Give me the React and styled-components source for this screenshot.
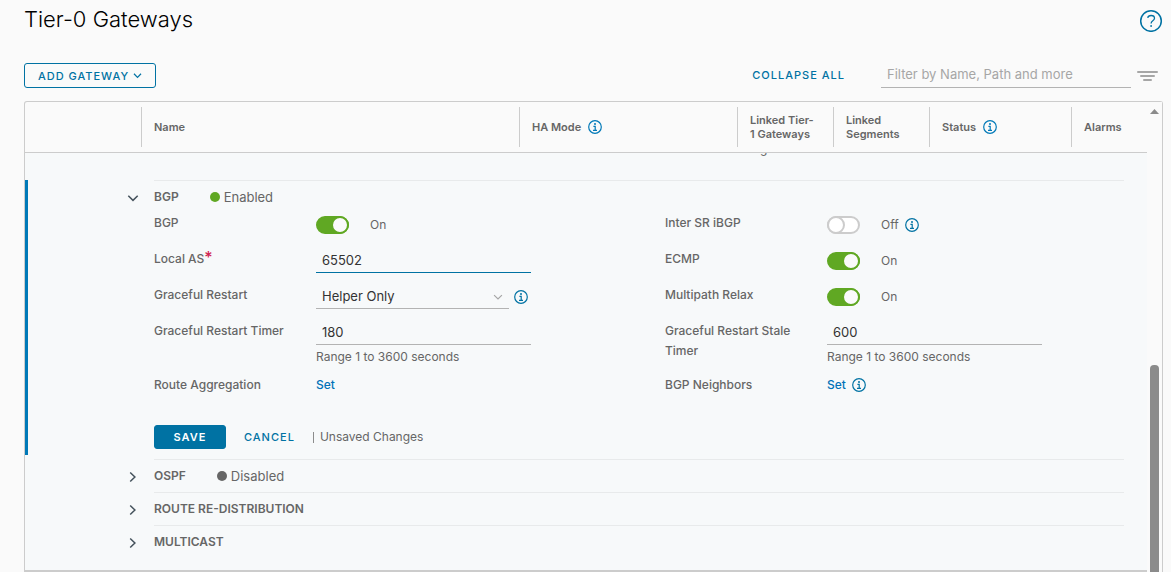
import React, { useState } from "react";
import styled, { createGlobalStyle } from "styled-components";

const Global = createGlobalStyle`
  *, *::before, *::after { box-sizing: border-box; }
  html { background: #fafafa; }
  body {
    margin: 0;
    color: #666;
    font: 400 12px/20px Inter, "Open Sans", "Liberation Sans", sans-serif;
  }
  button, input, select { font: inherit; color: inherit; }
`;

const Page = styled.main`
  padding: 4px 8px 0 24px;
`;

const TitleBar = styled.header`
  display: flex;
  align-items: flex-start;
  justify-content: space-between;
  height: 32px;
`;

const Title = styled.h1`
  margin: 0;
  color: #000;
  font-size: 22px;
  line-height: 30px;
  font-weight: 300;
`;

const IconButton = styled.button`
  display: flex;
  padding: 0;
  border: 0;
  background: none;
  color: ${(p) => p.$color || "#0072a3"};
  cursor: pointer;
`;

const HelpButton = styled(IconButton)`
  margin-top: 4px;
`;

const Toolbar = styled.div`
  display: flex;
  align-items: center;
  height: 25px;
  margin: 27px 0 13px;
`;

const Button = styled.button`
  display: flex;
  align-items: center;
  justify-content: center;
  gap: 4px;
  height: ${(p) => (p.$kind === "outline" ? "25px" : "24px")};
  padding: ${(p) => (p.$kind === "flat" ? "0" : "0 12px")};
  min-width: ${(p) => ({ primary: "72px", outline: "132px", flat: "0" })[p.$kind]};
  border: ${(p) => (p.$kind === "flat" ? "0" : "1px solid #0072a3")};
  border-radius: 3px;
  background: ${(p) => (p.$kind === "primary" ? "#0072a3" : "transparent")};
  color: ${(p) => (p.$kind === "primary" ? "#fff" : "#0072a3")};
  font-size: 11px;
  line-height: 22px;
  font-weight: ${(p) => (p.$kind === "primary" ? 600 : 500)};
  letter-spacing: 1px;
  text-transform: uppercase;
  white-space: nowrap;
  cursor: pointer;
`;

const Tools = styled.div`
  display: flex;
  align-items: flex-start;
  margin-left: auto;
  padding-right: 5px;
`;

const Search = styled.input`
  width: 250px;
  height: 25px;
  margin: 0 6px 0 36px;
  padding: 0 6px 2px;
  border: 0;
  border-bottom: 1px solid #b3b3b3;
  background: transparent;
  font-size: 13px;
  outline: 0;
  &::placeholder { color: #a6a6a6; opacity: 1; }
`;

const FilterButton = styled(IconButton)`
  align-self: center;
`;

const Frame = styled.section`
  display: flex;
  border: 1px solid #ccc;
  border-bottom: 0;
  border-radius: 3px 3px 0 0;
`;

const Table = styled.table`
  flex: 1;
  width: 100%;
  table-layout: fixed;
  border-collapse: separate;
  border-spacing: 0;
`;

const HeadCell = styled.th`
  width: ${(p) => (p.$width ? p.$width + "px" : "auto")};
  height: 51px;
  padding: 5px 0;
  border-bottom: 1px solid #ccc;
  text-align: left;
  vertical-align: middle;
  font-size: 11px;
  line-height: 14px;
  font-weight: 600;
`;

const HeadLabel = styled.div`
  display: flex;
  align-items: center;
  gap: 7px;
  height: 40px;
  padding-left: 12px;
  border-left: 1px solid #ccc;
`;

const Detail = styled.td`
  padding: 0;
  border-bottom: 2px solid #ccc;
  background: #f7f9fa;
`;

const CutLine = styled.div`
  display: flex;
  align-items: flex-end;
  height: 3px;
  margin: 0 0 24px 735px;
  overflow: hidden;
  line-height: 14px;
`;

const Section = styled.section`
  display: grid;
  grid-template-columns: 126px 1fr;
  padding-right: 23px;
  margin-bottom: ${(p) => (p.$active ? "4px" : "0")};
  border-left: 3px solid ${(p) => (p.$active ? "#0079b8" : "transparent")};
`;

const Expander = styled.button`
  display: flex;
  align-items: center;
  justify-content: flex-end;
  height: 33px;
  padding: 2px 15px 0 0;
  border: 0;
  background: none;
  color: #45525c;
  cursor: pointer;
`;

const SectionBody = styled.div`
  border-top: 1px solid #e8eaeb;
  padding-bottom: ${(p) => p.$bottom || 0}px;
`;

const SectionHead = styled.div`
  display: flex;
  align-items: center;
  gap: 31px;
  height: 32px;
`;

const SectionTitle = styled.h2`
  margin: 0;
  font-size: 12px;
  font-weight: 600;
`;

const Status = styled.span`
  display: flex;
  align-items: center;
  gap: 4px;
  font-size: 13px;
  &::before {
    content: "";
    width: 10px;
    height: 10px;
    border-radius: 50%;
    background: ${(p) => (p.$on ? "#60a823" : "#666")};
  }
`;

const Form = styled.form`
  display: grid;
  grid-template-columns: 1fr 1fr;
  column-gap: 52px;
`;

const Field = styled.div`
  display: grid;
  grid-template-columns: 162px 215px;
  align-items: start;
  min-height: 36px;
`;

const Label = styled.label`
  padding-right: 16px;
  font-weight: 500;
`;

const Required = styled.span`
  color: #d0214f;
  font-size: 16px;
  line-height: 12px;
`;

const Control = styled.div`
  display: flex;
  align-items: center;
  gap: ${(p) => p.$gap || 6}px;
  min-height: ${(p) => (p.$link ? "20px" : "24px")};
`;

const Toggle = styled.input`
  appearance: none;
  width: 33px;
  height: 18px;
  margin: 0 15px 0 0;
  border: 2px solid #ccc;
  border-radius: 9px;
  background: #fff;
  cursor: pointer;
  &::before {
    content: "";
    display: block;
    width: 18px;
    height: 18px;
    margin: -2px;
    border: 2px solid #ccc;
    border-radius: 50%;
    background: #fff;
  }
  &:checked { border-color: #60a823; background: #60a823; }
  &:checked::before {
    margin-left: 13px;
    border-color: #60a823;
    background: #fafafa;
  }
`;

const TextInput = styled.input`
  width: 100%;
  height: 24px;
  padding: 0 6px 1px;
  border: 0;
  border-bottom: 1px solid ${(p) => (p.$active ? "#0072a3" : "#b3b3b3")};
  background: transparent;
  color: #333;
  font-size: 13px;
  outline: 0;
`;

const SelectBox = styled.div`
  display: grid;
  flex: 0 0 193px;
  align-items: center;
  border-bottom: 1px solid #b3b3b3;
  color: #a6a6a6;
  & > * { grid-area: 1 / 1; }
  & > svg { justify-self: end; margin-right: 6px; pointer-events: none; }
`;

const Select = styled.select`
  appearance: none;
  width: 100%;
  height: 23px;
  padding: 0 6px 1px;
  border: 0;
  background: transparent;
  color: #333;
  font-size: 13px;
  outline: 0;
`;

const Help = styled.p`
  margin: 2px 0 8px;
  font-size: 12px;
`;

const Link = styled.a`
  color: #0072b8;
  font-weight: 500;
  text-decoration: none;
`;

const Actions = styled.div`
  display: flex;
  align-items: center;
  grid-column: 1 / -1;
  gap: 18px;
  margin-top: 14px;
`;

const Unsaved = styled.span`
  display: flex;
  align-items: center;
  gap: 6px;
  &::before {
    content: "";
    width: 1px;
    height: 11px;
    background: #8c8c8c;
  }
`;

const Scrollbar = styled.div`
  display: flex;
  flex: 0 0 15px;
  flex-direction: column;
  align-items: center;
  padding-top: 7px;
  background: #fafafa;
`;

const Thumb = styled.div`
  flex: 207;
  width: 9px;
  border-radius: 4px 4px 0 0;
  background: #8b8b8b;
`;

const Track = styled.div`
  flex: 251;
`;

const Chevron = ({ size = 12, dir = "down", stroke = 1.5 }) => (
  <svg width={size} height={size} viewBox="0 0 12 12" fill="none" stroke="currentColor" strokeWidth={stroke} aria-hidden="true">
    <path d={dir === "down" ? "M1.3 3.700 6 8.400 10.7 3.700" : "M3.200 1.500 7.900 6 3.200 10.500"} />
  </svg>
);

const Info = ({ size = 14, color = "#0072a3" }) => (
  <svg width={size} height={size} viewBox="0 0 14 14" fill="none" stroke={color} role="img" aria-label="Info">
    <circle cx="7" cy="7" r="6.3" strokeWidth="1.2" />
    <circle cx="7" cy="3.9" r="1" fill={color} stroke="none" />
    <path d="M5.4 6.3H7.2V10.2M5 10.4H9" strokeWidth="1.2" />
  </svg>
);

const ToggleField = ({ id, label, initial, info }) => {
  const [on, setOn] = useState(initial);
  return (
    <Field>
      <Label htmlFor={id}>{label}</Label>
      <Control>
        <Toggle id={id} type="checkbox" checked={on} onChange={() => setOn(!on)} />
        <span>{on ? "On" : "Off"}</span>
        {info && <Info />}
      </Control>
    </Field>
  );
};

const TextField = ({ id, label, value, required, help, active }) => (
  <Field>
    <Label htmlFor={id}>
      {label}
      {required && <Required>*</Required>}
    </Label>
    <div>
      <Control>
        <TextInput id={id} defaultValue={value} $active={active} />
      </Control>
      {help && <Help>{help}</Help>}
    </div>
  </Field>
);

const LinkField = ({ id, label, info }) => (
  <Field>
    <Label as="span" id={id}>{label}</Label>
    <Control $link>
      <Link href="#set" aria-describedby={id}>Set</Link>
      {info && <Info />}
    </Control>
  </Field>
);

const columns = [
  { label: "Name" },
  { label: "HA Mode", width: 218, info: true },
  { label: <>Linked Tier-<br />1 Gateways</>, width: 96 },
  { label: <>Linked<br />Segments</>, width: 96 },
  { label: "Status", width: 142, info: true },
  { label: "Alarms", width: 76 },
];

const closedSections = [
  { title: "OSPF", status: "Disabled" },
  { title: "ROUTE RE-DISTRIBUTION" },
  { title: "MULTICAST", bottom: 12 },
];

export default function App() {
  return (
    <Page>
      <Global />
      <TitleBar>
        <Title>Tier-0 Gateways</Title>
        <HelpButton aria-label="Help">
          <svg width="24" height="24" viewBox="0 0 24 24" fill="none" stroke="currentColor">
            <circle cx="12" cy="13" r="10.3" strokeWidth="1.5" />
            <path d="M8.700 9.800C9.100 8.200 10.500 7.500 12.100 7.500c2 0 3.400 1.100 3.400 2.800 0 2.600-3.400 2.500-3.400 5.100" strokeWidth="1.3" />
            <circle cx="12.100" cy="18" r="0.9" fill="currentColor" stroke="none" />
          </svg>
        </HelpButton>
      </TitleBar>
      <Toolbar>
        <Button $kind="outline">
          Add Gateway
          <Chevron size={9} stroke={1.600} />
        </Button>
        <Tools>
          <Button $kind="flat">Collapse All</Button>
          <Search aria-label="Filter" placeholder="Filter by Name, Path and more" />
          <FilterButton aria-label="Filter options" $color="#a6a6a6">
            <svg width="21" height="12" viewBox="0 0 21 12" fill="currentColor">
              <rect y="1" width="21" height="2" rx="1" />
              <rect x="3" y="5" width="15" height="2" rx="1" />
              <rect x="6" y="9" width="9" height="2" rx="1" />
            </svg>
          </FilterButton>
        </Tools>
      </Toolbar>
      <Frame>
        <Table>
          <thead>
            <tr>
              <HeadCell as="td" $width={116} />
              {columns.map((c, i) => (
                <HeadCell key={i} $width={c.width}>
                  <HeadLabel>
                    <span>{c.label}</span>
                    {c.info && <Info color="#0079b8" />}
                  </HeadLabel>
                </HeadCell>
              ))}
            </tr>
          </thead>
          <tbody>
            <tr>
              <Detail colSpan={7}>
                <CutLine>g</CutLine>
                <Section $active>
                  <Expander aria-label="Collapse BGP" aria-expanded="true">
                    <Chevron />
                  </Expander>
                  <SectionBody $bottom={6}>
                    <SectionHead>
                      <SectionTitle>BGP</SectionTitle>
                      <Status $on>Enabled</Status>
                    </SectionHead>
                    <Form onSubmit={(e) => e.preventDefault()}>
                      <ToggleField id="bgp" label="BGP" initial={true} />
                      <ToggleField id="ibgp" label="Inter SR iBGP" initial={false} info />
                      <TextField id="as" label="Local AS" value="65502" required active />
                      <ToggleField id="ecmp" label="ECMP" initial={true} />
                      <Field>
                        <Label htmlFor="restart">Graceful Restart</Label>
                        <Control $gap={5}>
                          <SelectBox>
                            <Select id="restart">
                              <option>Helper Only</option>
                            </Select>
                            <Chevron size={10} stroke={1.4} />
                          </SelectBox>
                          <Info />
                        </Control>
                      </Field>
                      <ToggleField id="relax" label="Multipath Relax" initial={true} />
                      <TextField id="timer" label="Graceful Restart Timer" value="180" help="Range 1 to 3600 seconds" />
                      <TextField id="stale" label="Graceful Restart Stale Timer" value="600" help="Range 1 to 3600 seconds" />
                      <LinkField id="aggregation" label="Route Aggregation" />
                      <LinkField id="neighbors" label="BGP Neighbors" info />
                      <Actions>
                        <Button $kind="primary" type="submit">Save</Button>
                        <Button $kind="flat" type="button">Cancel</Button>
                        <Unsaved>Unsaved Changes</Unsaved>
                      </Actions>
                    </Form>
                  </SectionBody>
                </Section>
                {closedSections.map((s) => (
                  <Section key={s.title}>
                    <Expander aria-label={"Expand " + s.title} aria-expanded="false">
                      <Chevron dir="right" />
                    </Expander>
                    <SectionBody $bottom={s.bottom}>
                      <SectionHead>
                        <SectionTitle>{s.title}</SectionTitle>
                        {s.status && <Status>{s.status}</Status>}
                      </SectionHead>
                    </SectionBody>
                  </Section>
                ))}
              </Detail>
            </tr>
          </tbody>
        </Table>
        <Scrollbar aria-hidden="true">
          <svg width="9" height="5" viewBox="0 0 9 5" fill="#8b8b8b">
            <path d="M0 5 4.500 0 9 5Z" />
          </svg>
          <Track />
          <Thumb />
        </Scrollbar>
      </Frame>
    </Page>
  );
}
